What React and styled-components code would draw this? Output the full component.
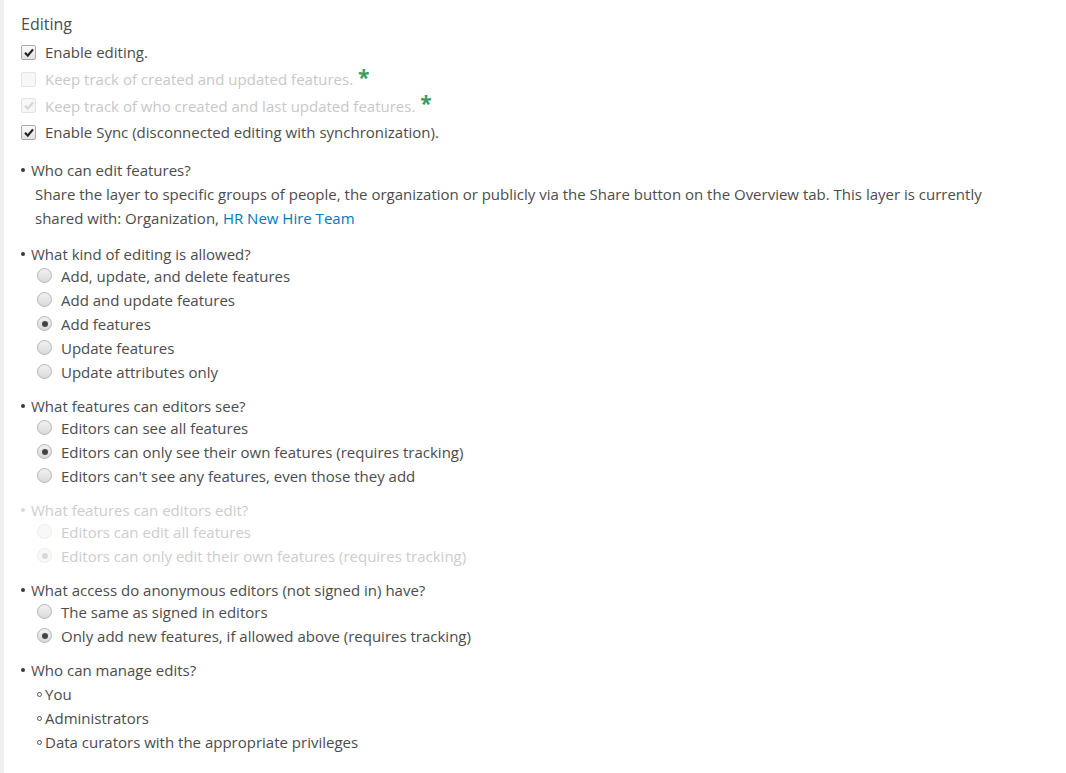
import React from "react"
import styled, { createGlobalStyle } from "styled-components"

const Global = createGlobalStyle`
  html, body { margin: 0; padding: 0; background: #fff; }
  body {
    font-family: "Open Sans", Lato, sans-serif;
    color: #4c4c4c;
  }
`

const Page = styled.div`
  display: flex;
  min-height: 773px;
`

const Rail = styled.div`
  width: 4px;
  background: #f0f0f0;
  flex-shrink: 0;
`

const Content = styled.div`
  padding: 12px 20px 0 17px;
  font-size: 15px;
  flex: 1;
`

const Title = styled.div`
  font-size: 16px;
  line-height: 24px;
  margin-bottom: 3px;
`

const CheckRow = styled.label`
  display: flex;
  align-items: center;
  height: 26.7px;
  color: ${p => (p.$disabled ? "#c8c8c8" : "#4c4c4c")};
`

const Box = styled.span`
  width: 13px;
  height: 13px;
  border: 1px solid ${p => (p.$disabled ? "#e4e4e4" : "#a9a9a9")};
  border-radius: 2px;
  background: ${p => (p.$disabled ? "#f7f7f7" : "linear-gradient(#fafafa, #e2e2e2)")};
  margin-right: 9px;
  display: flex;
  align-items: center;
  justify-content: center;
  flex-shrink: 0;
`

const Star = styled.span`
  color: #3d9a5c;
  margin-left: 5px;
  font-size: 21px;
  line-height: 1;
  font-weight: 700;
  position: relative;
  top: -2px;
`

const Section = styled.div`
  margin-top: ${p => (p.$first ? "12px" : "10px")};
  color: ${p => (p.$disabled ? "#cdcdcd" : "#4c4c4c")};
`

const Question = styled.div`
  display: flex;
  align-items: center;
  line-height: 24px;
  &::before {
    content: "";
    width: 4px;
    height: 4px;
    border-radius: 50%;
    margin: 1px 6px 0 0;
    background: ${p => (p.$disabled ? "#d8d8d8" : "#3a3a3a")};
  }
`

const Desc = styled.div`
  padding-left: 14px;
  max-width: 985px;
  line-height: 24px;
  padding-bottom: 2px;
`

const Link = styled.a`
  color: #0079c1;
  text-decoration: none;
`

const RadioList = styled.div`
  margin-top: -2px;
`

const RadioRow = styled.div`
  display: flex;
  align-items: center;
  height: 24px;
  padding-left: 16px;
`

const Radio = styled.span`
  width: 13px;
  height: 13px;
  border-radius: 50%;
  border: 1px solid ${p => (p.$disabled ? "#ececec" : "#b5b5b5")};
  background: ${p => (p.$disabled ? "#f8f8f8" : "linear-gradient(#f2f2f2, #d9d9d9)")};
  margin-right: 9px;
  display: flex;
  align-items: center;
  justify-content: center;
  flex-shrink: 0;
  &::after {
    content: "";
    display: ${p => (p.$checked ? "block" : "none")};
    width: 6px;
    height: 6px;
    border-radius: 50%;
    background: ${p => (p.$disabled ? "#d8d8d8" : "#444")};
  }
`

const SubItem = styled.div`
  display: flex;
  align-items: center;
  height: 24px;
  padding-left: 16px;
  &::before {
    content: "";
    width: 3px;
    height: 3px;
    border: 1px solid #555;
    border-radius: 50%;
    margin: 2px 3px 0 0;
  }
`

function Check({ checked, disabled, children, star }) {
  return (
    <CheckRow $disabled={disabled}>
      <Box $disabled={disabled}>
        {checked && (
          <svg width="10" height="9" viewBox="0 0 10 9">
            <path d="M1 4.8 L3.8 7.6 L9 1.4" fill="none" stroke={disabled ? "#d6d6d6" : "#222"} strokeWidth="2.2" />
          </svg>
        )}
      </Box>
      {children}
      {star && <Star>*</Star>}
    </CheckRow>
  )
}

function Options({ items, checked, disabled }) {
  return (
    <RadioList>
      {items.map((t, i) => (
        <RadioRow key={t}>
          <Radio $checked={i === checked} $disabled={disabled} />
          {t}
        </RadioRow>
      ))}
    </RadioList>
  )
}

export default function App() {
  return (
    <Page>
      <Global />
      <Rail />
      <Content>
        <Title>Editing</Title>
        <Check checked>Enable editing.</Check>
        <Check disabled star>Keep track of created and updated features.</Check>
        <Check checked disabled star>Keep track of who created and last updated features.</Check>
        <Check checked>Enable Sync (disconnected editing with synchronization).</Check>

        <Section $first>
          <Question>Who can edit features?</Question>
          <Desc>
            Share the layer to specific groups of people, the organization or publicly via the Share button on the Overview tab. This layer is currently shared with: Organization, <Link href="#">HR New Hire Team</Link>
          </Desc>
        </Section>

        <Section>
          <Question>What kind of editing is allowed?</Question>
          <Options
            checked={2}
            items={["Add, update, and delete features", "Add and update features", "Add features", "Update features", "Update attributes only"]}
          />
        </Section>

        <Section>
          <Question>What features can editors see?</Question>
          <Options
            checked={1}
            items={["Editors can see all features", "Editors can only see their own features (requires tracking)", "Editors can't see any features, even those they add"]}
          />
        </Section>

        <Section $disabled>
          <Question $disabled>What features can editors edit?</Question>
          <Options
            disabled
            checked={1}
            items={["Editors can edit all features", "Editors can only edit their own features (requires tracking)"]}
          />
        </Section>

        <Section>
          <Question>What access do anonymous editors (not signed in) have?</Question>
          <Options
            checked={1}
            items={["The same as signed in editors", "Only add new features, if allowed above (requires tracking)"]}
          />
        </Section>

        <Section>
          <Question>Who can manage edits?</Question>
          <SubItem>You</SubItem>
          <SubItem>Administrators</SubItem>
          <SubItem>Data curators with the appropriate privileges</SubItem>
        </Section>
      </Content>
    </Page>
  )
}
